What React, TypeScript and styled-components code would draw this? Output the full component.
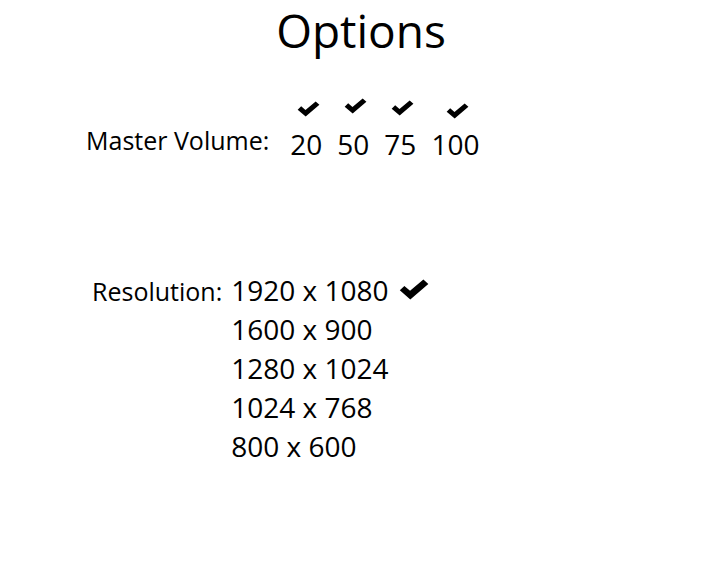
import React from "react";
import styled, { createGlobalStyle } from "styled-components";

const Global = createGlobalStyle`
  html, body { margin: 0; padding: 0; background: #ffffff; }
  body { font-family: "Open Sans", "Noto Sans", sans-serif; color: #000; }
`;

const Page = styled.div`
  width: 722px;
  height: 564px;
  box-sizing: border-box;
  padding-top: 3px;
`;

const Title = styled.h1`
  margin: 0;
  font-size: 46px;
  font-weight: 400;
  line-height: 54px;
  text-align: center;
`;

const VolumeRow = styled.div`
  display: flex;
  align-items: flex-end;
  margin-top: 43px;
  padding-left: 86px;
`;

const Label = styled.span<{ $lift?: number }>`
  font-size: 25px;
  line-height: 32px;
  white-space: nowrap;
  margin-bottom: ${(p) => p.$lift ?? 0}px;
`;

const VolumeOptions = styled.div`
  display: flex;
  gap: 15px;
  margin-left: 21px;
`;

const VolumeOption = styled.div`
  display: flex;
  flex-direction: column;
  align-items: center;
  gap: 12px;
`;

const CheckSlot = styled.div<{ $drop: number }>`
  height: 16px;
  display: flex;
  transform: translate(2px, ${(p) => p.$drop}px);
`;

const Number = styled.span`
  font-size: 28px;
  line-height: 32px;
`;

const ResolutionRow = styled.div`
  display: flex;
  align-items: baseline;
  margin-top: 111px;
  padding-left: 92px;
`;

const ResolutionList = styled.div`
  display: flex;
  flex-direction: column;
  margin-left: 9px;
`;

const ResolutionItem = styled.div`
  display: flex;
  align-items: center;
  font-size: 28px;
  line-height: 39px;
  white-space: nowrap;
`;

const CheckWrap = styled.span`
  display: inline-flex;
  margin-left: 10px;
  margin-top: -2px;
`;

const Check = ({ w, h }: { w: number; h: number }) => (
  <svg width={w} height={h} viewBox="0 0 24 17" aria-hidden="true">
    <path d="M0.5 9.2 L4.2 5.6 L8.8 9.6 L19.6 0.4 L23.6 4 L9 16.6 Z" fill="#000" />
  </svg>
);

const volumes = [
  { v: "20", drop: 1 },
  { v: "50", drop: -2 },
  { v: "75", drop: 0 },
  { v: "100", drop: 3 },
];

const resolutions = ["1920 x 1080", "1600 x 900", "1280 x 1024", "1024 x 768", "800 x 600"];

export default function App() {
  return (
    <Page>
      <Global />
      <Title>Options</Title>
      <VolumeRow>
        <Label $lift={4}>Master Volume:</Label>
        <VolumeOptions>
          {volumes.map((o) => (
            <VolumeOption key={o.v}>
              <CheckSlot $drop={o.drop}>
                <Check w={23} h={16} />
              </CheckSlot>
              <Number>{o.v}</Number>
            </VolumeOption>
          ))}
        </VolumeOptions>
      </VolumeRow>
      <ResolutionRow>
        <Label>Resolution:</Label>
        <ResolutionList>
          {resolutions.map((r, i) => (
            <ResolutionItem key={r}>
              {r}
              {i === 0 && (
                <CheckWrap>
                  <Check w={30} h={21} />
                </CheckWrap>
              )}
            </ResolutionItem>
          ))}
        </ResolutionList>
      </ResolutionRow>
    </Page>
  );
}
